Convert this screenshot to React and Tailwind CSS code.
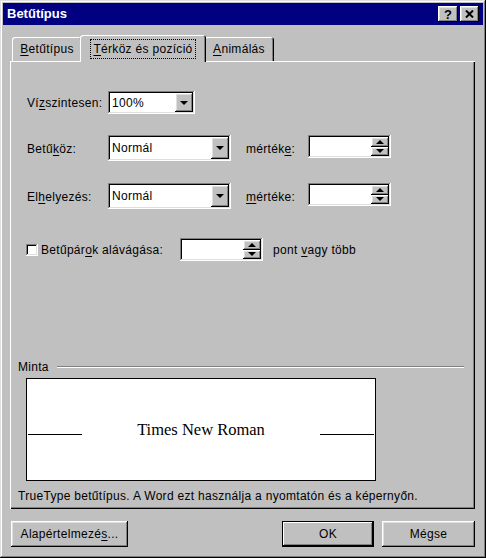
import { useState } from 'react';

// Win98 bevels
const RAISED = 'shadow-[inset_-1px_-1px_#000,inset_1px_1px_#fff,inset_-2px_-2px_#808080,inset_2px_2px_#dfdfdf]';
const SUNKEN = 'shadow-[inset_-1px_-1px_#fff,inset_1px_1px_#808080,inset_-2px_-2px_#dfdfdf,inset_2px_2px_#000]';

const U = ({ children }) => <span className="underline underline-offset-[2px]">{children}</span>;

const DownArrow = () => (
  <span className="block w-0 h-0 border-x-[4px] border-x-transparent border-t-[4px] border-t-black" />
);

const UpArrow = () => (
  <span className="block w-0 h-0 border-x-[4px] border-x-transparent border-b-[4px] border-b-black" />
);

const Combo = ({ value, size }) => (
  <div className={`flex bg-white p-[2px] ${SUNKEN} ${size}`}>
    <div className="flex-1 flex items-center pl-[2px]">{value}</div>
    <div className={`w-[18px] bg-[#c0c0c0] flex items-center justify-center ${RAISED}`}>
      <DownArrow />
    </div>
  </div>
);

const Spinner = ({ size }) => (
  <div className={`flex bg-white p-[2px] ${SUNKEN} ${size}`}>
    <div className="flex-1" />
    <div className="w-[18px] flex flex-col">
      <div className={`flex-1 bg-[#c0c0c0] flex items-center justify-center ${RAISED}`}>
        <UpArrow />
      </div>
      <div className={`flex-1 bg-[#c0c0c0] flex items-center justify-center ${RAISED}`}>
        <DownArrow />
      </div>
    </div>
  </div>
);

const Label = ({ children, size }) => (
  <div className={`flex items-center ${size}`}>{children}</div>
);

const Tab = ({ children, active, size }) => (
  <div
    className={`flex items-center justify-center bg-[#c0c0c0] rounded-t-[3px] shadow-[inset_1px_1px_#fff,inset_-1px_0_#000,inset_-2px_0_#808080] ${size} ${
      active ? 'relative z-10 -mb-[1px] -mx-[2px]' : ''
    }`}
  >
    {active ? (
      <span className="px-[3px] py-[1px] outline outline-1 outline-dotted outline-black -outline-offset-1">{children}</span>
    ) : (
      children
    )}
  </div>
);

const Button = ({ children, size, isDefault }) => (
  <button
    className={`flex items-center justify-center bg-[#c0c0c0] ${size} ${
      isDefault
        ? 'shadow-[inset_0_0_0_1px_#000,inset_-2px_-2px_#000,inset_2px_2px_#fff,inset_-3px_-3px_#808080]'
        : RAISED
    }`}
  >
    {children}
  </button>
);

export default function App() {
  const [active] = useState(1);

  return (
    <div className="w-[486px] h-[558px] bg-[#c0c0c0] p-[3px] flex flex-col text-black text-[12px] tracking-[0.3px] font-['Liberation_Sans',Arial,sans-serif] shadow-[inset_-1px_-1px_#000,inset_1px_1px_#dfdfdf,inset_-2px_-2px_#808080,inset_2px_2px_#fff]">
      {/* Title bar */}
      <div className="h-[22px] bg-[#000080] flex items-center justify-between pl-[4px] pr-[4px]">
        <span className="text-white font-bold text-[13px] tracking-normal">Betűtípus</span>
        <div className="flex gap-[2px]">
          <div className={`w-[20px] h-[16px] bg-[#c0c0c0] flex items-center justify-center font-bold text-[13px] leading-none ${RAISED}`}>
            ?
          </div>
          <div className={`w-[19px] h-[16px] bg-[#c0c0c0] flex items-center justify-center ${RAISED}`}>
            <svg width="9" height="8" viewBox="0 0 9 8">
              <path d="M1 0.5 L8 7.5 M8 0.5 L1 7.5" stroke="#000" strokeWidth="2" />
            </svg>
          </div>
        </div>
      </div>

      {/* Body */}
      <div className="flex-1 flex flex-col pl-[7px] pr-[8px] pt-[10px]">
        {/* Tabs */}
        <div className="flex items-end h-[26px] pl-[2px]">
          <Tab size="w-[70px] h-[24px]" active={active === 0}>
            <span><U>B</U>etűtípus</span>
          </Tab>
          <Tab size="w-[126px] h-[27px]" active={active === 1}>
            <span><U>T</U>érköz és pozíció</span>
          </Tab>
          <Tab size="w-[70px] h-[24px]" active={active === 2}>
            <span><U>A</U>nimálás</span>
          </Tab>
        </div>

        {/* Panel */}
        <div className="h-[448px] flex flex-col shadow-[inset_1px_1px_#fff,inset_-1px_-1px_#000,inset_-2px_-2px_#808080]">
          <div className="flex flex-col pt-[30px] pl-[17px]">
            <div className="flex items-center h-[23px]">
              <Label size="w-[81px] h-[23px]">
                <span>Ví<U>z</U>szintesen:</span>
              </Label>
              <Combo value="100%" size="w-[87px] h-[23px]" />
            </div>

            <div className="flex items-start mt-[21px]">
              <Label size="w-[81px] h-[28px]">
                <span>Betű<U>k</U>öz:</span>
              </Label>
              <Combo value="Normál" size="w-[123px] h-[26px]" />
              <Label size="w-[62px] h-[28px] ml-[15px]">
                <span>mérték<U>e</U>:</span>
              </Label>
              <Spinner size="w-[83px] h-[23px]" />
            </div>

            <div className="flex items-start mt-[20px]">
              <Label size="w-[81px] h-[28px]">
                <span>El<U>h</U>elyezés:</span>
              </Label>
              <Combo value="Normál" size="w-[123px] h-[26px]" />
              <Label size="w-[62px] h-[28px] ml-[15px]">
                <span><U>m</U>értéke:</span>
              </Label>
              <Spinner size="w-[83px] h-[23px]" />
            </div>

            <div className="flex items-center h-[23px] mt-[27px]">
              <div className={`w-[12px] h-[12px] bg-white -ml-[1px] ${SUNKEN}`} />
              <Label size="w-[139px] h-[23px] ml-[3px]">
                <span>Betűpár<U>o</U>k alávágása:</span>
              </Label>
              <Spinner size="w-[83px] h-[23px]" />
              <span className="ml-[10px]">pont <U>v</U>agy több</span>
            </div>
          </div>

          <div className="flex flex-col pl-[8px] pr-[11px] mt-[99px]">
            <div className="flex items-center h-[14px]">
              <span>Minta</span>
              <div className="flex-1 ml-[8px] border-t border-t-[#808080] border-b border-b-white" />
            </div>

            <div className="mt-[4px] ml-[8px] w-[350px] h-[103px] bg-white border border-black">
              <div className="flex items-baseline justify-between px-[1px] pt-[41px]">
                <div className="w-[54px] h-px bg-black" />
                <span className="font-['Liberation_Serif','Times_New_Roman',serif] text-[16.5px] leading-[20px] tracking-normal">
                  Times New Roman
                </span>
                <div className="w-[54px] h-px bg-black" />
              </div>
            </div>

            <div className="mt-[8px] leading-[14px]">
              TrueType betűtípus. A Word ezt használja a nyomtatón és a képernyőn.
            </div>
          </div>
        </div>

        {/* Buttons */}
        <div className="flex mt-[12px] h-[26px]">
          <Button size="w-[117px] h-[26px] ml-[1px]">
            <span>Alapértelmezé<U>s</U>...</span>
          </Button>
          <Button size="w-[92px] h-[26px] ml-auto" isDefault>
            OK
          </Button>
          <Button size="w-[93px] h-[26px] ml-[8px]">Mégse</Button>
        </div>
      </div>
    </div>
  );
}
